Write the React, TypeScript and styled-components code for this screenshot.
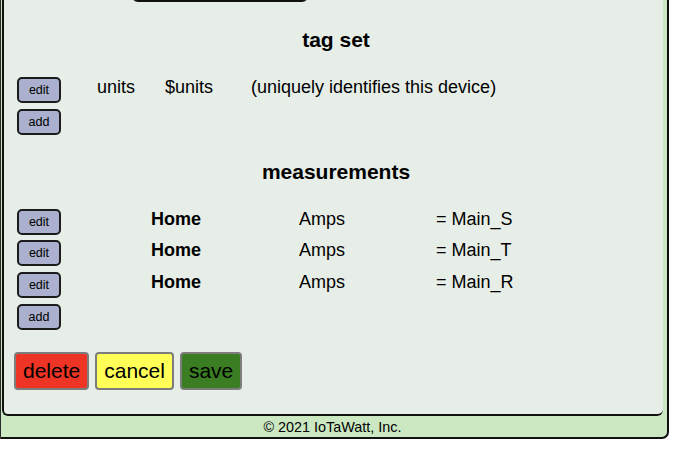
import React from "react";
import styled, { createGlobalStyle } from "styled-components";

const Global = createGlobalStyle`
  html, body { margin: 0; padding: 0; background: #ffffff; }
  body { font-family: "Liberation Sans", Arial, Helvetica, sans-serif; color: #000; }
`;

const Frame = styled.div`
  width: 661px;
  background: #cbe8c3;
  border-left: 1px solid #2a2a2a;
  border-right: 2px solid #111;
  border-bottom: 2px solid #111;
  border-bottom-right-radius: 7px;
  padding-left: 1px;
  padding-right: 4px;
  overflow: hidden;
`;

const Panel = styled.div`
  background: #e7eee7;
  border-left: 2px solid #111;
  border-bottom: 2px solid #111;
  border-bottom-left-radius: 6px;
  border-bottom-right-radius: 6px;
  padding: 0 5px 24px 10px;
`;

const TopBox = styled.div`
  width: 172px;
  height: 20px;
  margin: -22px 0 0 118px;
  border: 2px solid #111;
  border-radius: 6px;
  background: #e7eee7;
`;

const Heading = styled.h3<{ $top: number }>`
  margin: ${(p) => p.$top}px 0 0 0;
  font-size: 21px;
  line-height: 24px;
  font-weight: bold;
  text-align: center;
`;

const Table = styled.div<{ $cols: string }>`
  display: grid;
  grid-template-columns: ${(p) => p.$cols};
  grid-auto-rows: 26px;
  row-gap: 5.7px;
  align-items: start;
  margin-top: 25px;
  padding-left: 3px;
  font-size: 18px;
`;

const SmallButton = styled.button`
  width: 44px;
  height: 26px;
  padding: 0;
  background: #aab0cd;
  border: 2px solid #1c1c1c;
  border-radius: 5px;
  font-family: "Liberation Sans", Arial, Helvetica, sans-serif;
  font-size: 12.5px;
  color: #000;
  justify-self: start;
`;

const Cell = styled.span<{ $bold?: boolean }>`
  font-weight: ${(p) => (p.$bold ? "bold" : "normal")};
  line-height: 21px;
  white-space: nowrap;
`;

const Actions = styled.div`
  display: flex;
  gap: 6px;
  margin-top: 22px;
`;

const BigButton = styled.button<{ $bg: string }>`
  padding: 5px 7px;
  background: ${(p) => p.$bg};
  border: 2px solid #7d7d7d;
  border-radius: 4px;
  font-family: "Liberation Sans", Arial, Helvetica, sans-serif;
  font-size: 21px;
  line-height: 24px;
  color: #000;
`;

const Footer = styled.div`
  height: 21px;
  font-size: 14.4px;
  line-height: 21px;
  text-align: center;
  padding-top: 1px;
  box-sizing: border-box;
`;

const measurements = [
  { name: "Home", units: "Amps", expr: "= Main_S" },
  { name: "Home", units: "Amps", expr: "= Main_T" },
  { name: "Home", units: "Amps", expr: "= Main_R" },
];

export default function App() {
  return (
    <>
      <Global />
      <Frame>
        <Panel>
          <TopBox />
          <Heading $top={26}>tag set</Heading>
          <Table $cols="80px 68px 86px 1fr">
            <SmallButton>edit</SmallButton>
            <Cell>units</Cell>
            <Cell>$units</Cell>
            <Cell>(uniquely identifies this device)</Cell>
            <SmallButton>add</SmallButton>
          </Table>
          <Heading $top={25}>measurements</Heading>
          <Table $cols="134px 148px 137px 1fr">
            {measurements.map((m, i) => (
              <React.Fragment key={i}>
                <SmallButton>edit</SmallButton>
                <Cell $bold>{m.name}</Cell>
                <Cell>{m.units}</Cell>
                <Cell>{m.expr}</Cell>
              </React.Fragment>
            ))}
            <SmallButton>add</SmallButton>
          </Table>
          <Actions>
            <BigButton $bg="#ee3424">delete</BigButton>
            <BigButton $bg="#ffff57">cancel</BigButton>
            <BigButton $bg="#3a7d23">save</BigButton>
          </Actions>
        </Panel>
        <Footer>© 2021 IoTaWatt, Inc.</Footer>
      </Frame>
    </>
  );
}
